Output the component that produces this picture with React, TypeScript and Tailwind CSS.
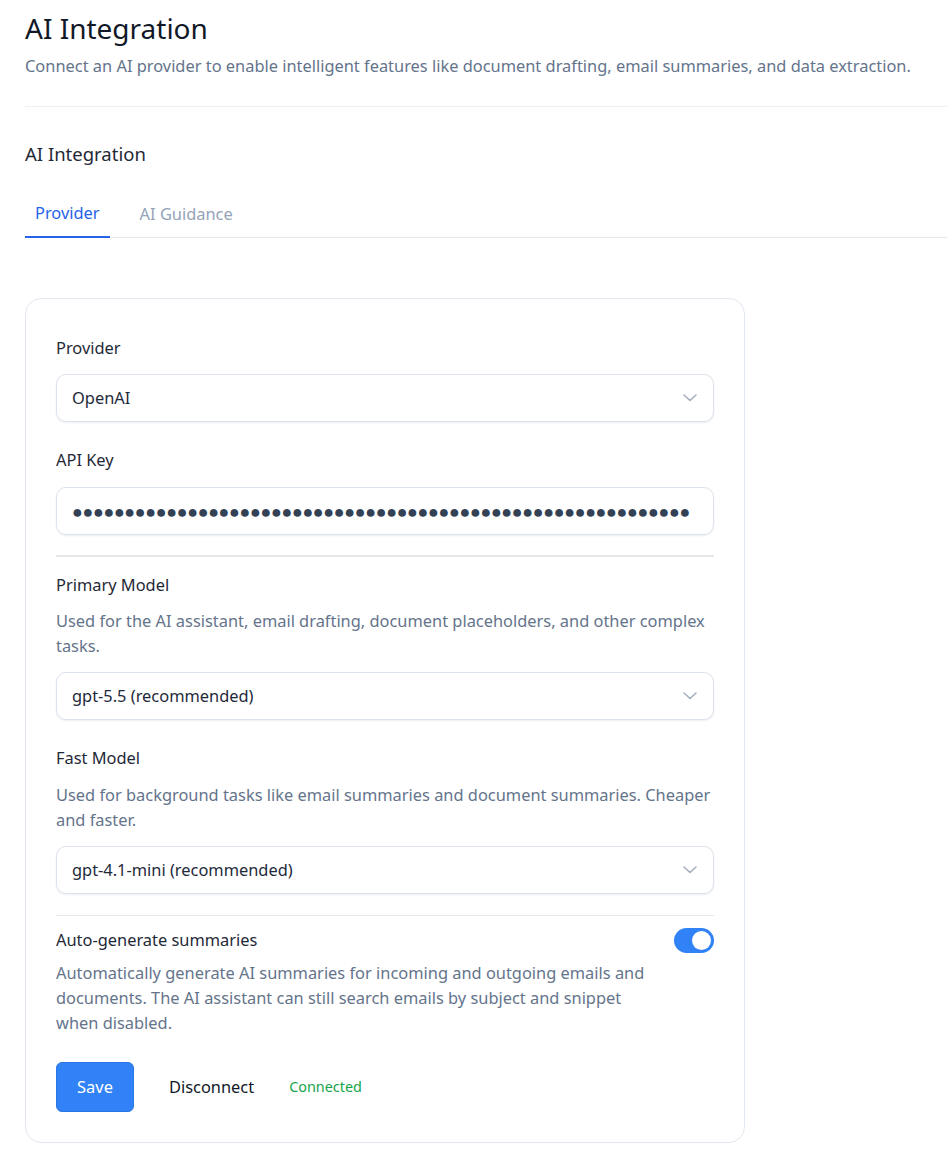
const font = { fontFamily: '"Noto Sans", sans-serif' };

function Chevron() {
  return (
    <svg width="14" height="8" viewBox="0 0 14 8" fill="none">
      <path d="M1 1l6 5.5L13 1" stroke="#a3acbb" strokeWidth="1.5" strokeLinecap="round" strokeLinejoin="round" />
    </svg>
  );
}

function Select({ value }: { value: string }) {
  return (
    <div className="flex h-12 items-center justify-between rounded-[10px] border border-[#dde3ec] bg-white pl-[15px] pr-[16px] shadow-[0_1px_2px_rgba(15,23,42,0.08)]">
      <span className="text-[16.4px] text-[#1e293b]">{value}</span>
      <Chevron />
    </div>
  );
}

export default function App() {
  return (
    <div className="min-h-screen bg-white pl-[25px] text-[#1f2937]" style={font}>
      <div className="pt-[10px]">
        <h1 className="text-[28px] leading-[36px] text-[#111827]">AI Integration</h1>
        <p className="mt-[8px] text-[16.4px] leading-[24px] text-[#64748b]">
          Connect an AI provider to enable intelligent features like document drafting, email summaries, and data extraction.
        </p>
      </div>
      <div className="mt-[28px] border-t border-[#eef0f3]" />

      <h2 className="mt-[34px] text-[18.5px] leading-[26px] text-[#1f2937]">AI Integration</h2>

      <div className="mt-[34px] flex border-b border-[#e5e7eb]">
        <button className="-mb-px border-b-2 border-[#2563eb] px-[10px] pb-[11px] text-[16.4px] leading-[24px] text-[#2563eb]">
          Provider
        </button>
        <button className="ml-[20px] px-[10px] pb-[11px] text-[16.4px] leading-[24px] text-[#94a3b8]">
          AI Guidance
        </button>
      </div>

      <div className="mt-[60px] mb-[20px] w-[720px] rounded-2xl border border-[#e2e8f0] px-[30px] pt-[37px] pb-[30px]">
        <label className="block text-[16.4px] leading-[24px] text-[#1f2937]">Provider</label>
        <div className="mt-[14px]">
          <Select value="OpenAI" />
        </div>

        <label className="mt-[26px] block text-[16.4px] leading-[24px] text-[#1f2937]">API Key</label>
        <div className="mt-[15px] flex h-12 items-center rounded-[10px] border border-[#dde3ec] pl-[15px] pr-[15px] shadow-[0_1px_2px_rgba(15,23,42,0.08)]">
          <span className="whitespace-nowrap text-[18px] leading-[24px] tracking-[-0.4px] text-[#334155]">
            {"●".repeat(59)}
          </span>
        </div>

        <div className="mt-[20px] border-t-2 border-[#e5e7eb]" />

        <label className="mt-[16px] block text-[16.4px] leading-[24px] text-[#1f2937]">Primary Model</label>
        <p className="mt-[11px] text-[16.4px] leading-[25px] text-[#64748b]">
          Used for the AI assistant, email drafting, document placeholders, and other complex tasks.
        </p>
        <div className="mt-[14px]">
          <Select value="gpt-5.5 (recommended)" />
        </div>

        <label className="mt-[26px] block text-[16.4px] leading-[24px] text-[#1f2937]">Fast Model</label>
        <p className="mt-[12px] text-[16.4px] leading-[25px] text-[#64748b]">
          Used for background tasks like email summaries and document summaries. Cheaper and faster.
        </p>
        <div className="mt-[14px]">
          <Select value="gpt-4.1-mini (recommended)" />
        </div>

        <div className="mt-[21px] border-t border-[#e5e7eb]" />

        <div className="mt-[12px] flex items-start justify-between">
          <div className="max-w-[600px]">
            <div className="text-[16.4px] leading-[24px] text-[#1f2937]">Auto-generate summaries</div>
            <p className="mt-[8px] text-[16.4px] leading-[25px] text-[#64748b]">
              Automatically generate AI summaries for incoming and outgoing emails and documents. The AI assistant can still search emails by subject and snippet when disabled.
            </p>
          </div>
          <div className="flex h-[25px] w-[40px] items-center justify-end rounded-full bg-[#3182f6] px-[3px]">
            <div className="h-[19px] w-[19px] rounded-full bg-white" />
          </div>
        </div>

        <div className="mt-[27px] flex items-center">
          <button className="h-[50px] w-[78px] rounded-[6px] border border-[#2b76e5] bg-[#3182f6] text-[16.4px] text-white">
            Save
          </button>
          <button className="ml-[35px] text-[16.4px] text-[#111827]">Disconnect</button>
          <span className="ml-[35px] text-[14.4px] text-[#16a34a]">Connected</span>
        </div>
      </div>
    </div>
  );
}
